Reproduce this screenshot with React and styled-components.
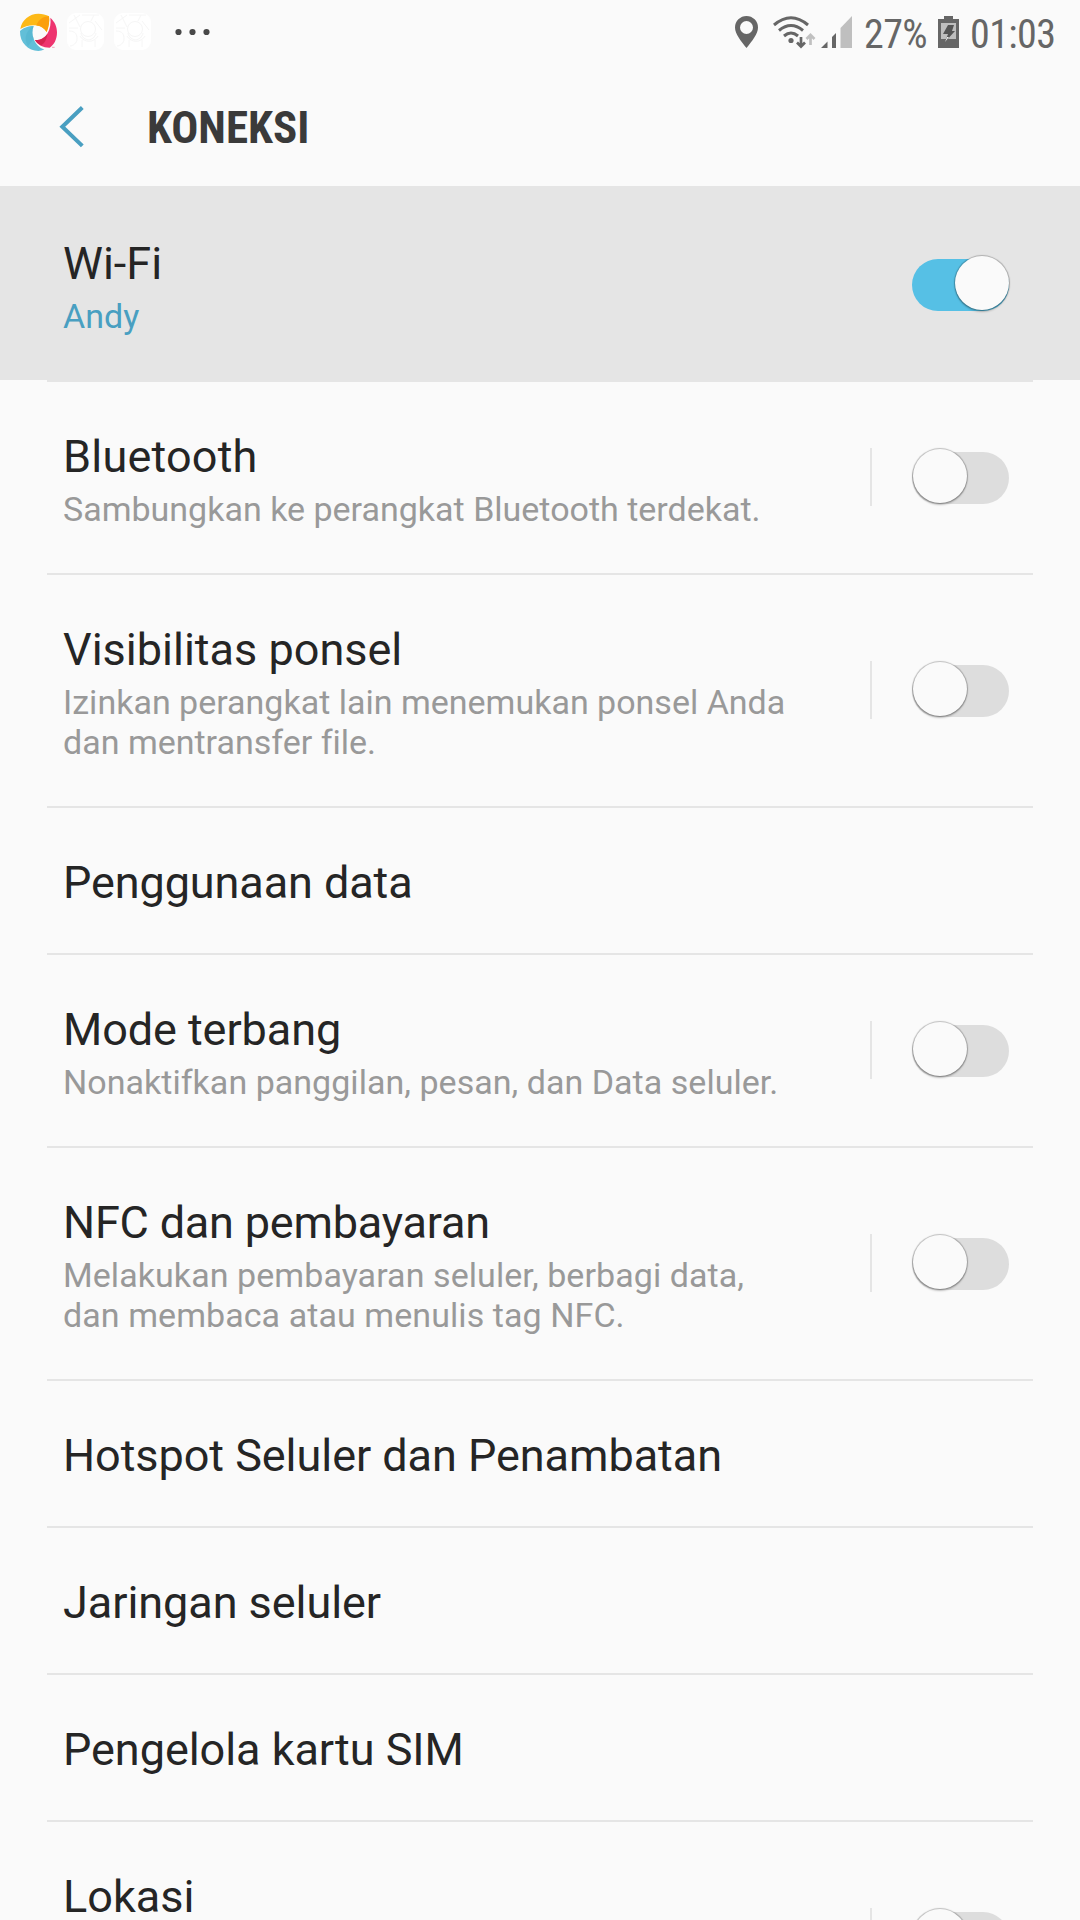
import React from "react";
import styled, { createGlobalStyle } from "styled-components";

const GlobalStyle = createGlobalStyle`
  html, body { margin: 0; padding: 0; background: #fafafa; }
  *, *::before, *::after { box-sizing: border-box; }
`;

const Screen = styled.main`
  display: flex;
  flex-direction: column;
  width: 1080px;
  height: 1920px;
  overflow: hidden;
  background: #fafafa;
  font-family: Roboto, "Liberation Sans", sans-serif;
  font-variant-ligatures: none;
  color: #252525;
`;

const StatusBar = styled.div`
  display: flex;
  flex: none;
  justify-content: space-between;
  height: 66px;
  padding: 0 26px 0 19px;
  color: #666;
`;

const Notifications = styled.div`
  display: flex;
  padding-top: 13px;
`;

const Indicators = styled.div`
  display: flex;
`;

const Glyph = styled.svg`
  display: block;
  flex: none;
  overflow: visible;
  margin-left: ${(p) => p.$gap || 0}px;
  margin-top: ${(p) => p.$drop || 0}px;
`;

const StatusText = styled.span`
  display: block;
  width: ${(p) => p.$width}px;
  margin-left: ${(p) => p.$gap}px;
  padding-top: 11px;
  font-size: 40px;
  line-height: 48px;
  letter-spacing: -0.6px;
  white-space: nowrap;
  font-stretch: 75%;
`;

const Header = styled.header`
  display: flex;
  flex: none;
  height: 120px;
  padding-left: 59px;
`;

const BackButton = styled.button`
  display: block;
  width: 88px;
  height: 120px;
  padding: 2px 0 0;
  border: 0;
  background: none;
`;

const Chevron = styled.svg`
  display: block;
`;

const Title = styled.h1`
  margin: 0;
  padding-top: 35px;
  font-size: 45px;
  line-height: 54px;
  font-weight: 700;
  color: #3a3a3a;
  white-space: nowrap;
  font-stretch: 75%;
`;

const List = styled.div`
  display: flex;
  flex-direction: column;
`;

const Row = styled.section`
  display: flex;
  flex: none;
  align-items: center;
  height: ${(p) => p.$height}px;
  padding: ${(p) => (p.$active ? 3 : 0)}px 70px 0 63px;
  background: ${(p) => (p.$active ? "#e5e5e5" : "transparent")};
`;

const Divider = styled.hr`
  flex: none;
  width: 986px;
  height: 2px;
  margin: 0 auto;
  border: 0;
  background: #e5e5e5;
`;

const Copy = styled.div`
  flex: 1;
  align-self: stretch;
  padding-top: 52px;
  white-space: pre-line;
`;

const Label = styled.div`
  font-size: 45px;
  line-height: 46px;
  letter-spacing: ${(p) => p.$tracking || 0}px;
`;

const Summary = styled.div`
  padding-top: 9px;
  font-size: 34px;
  line-height: 40px;
  letter-spacing: ${(p) => p.$tracking || 0}px;
  color: ${(p) => (p.$accent ? "#499fc1" : "#999")};
`;

const Separator = styled.div`
  width: 2px;
  height: 58px;
  margin: 0 40px 1px 0;
  background: #e5e5e5;
`;

const Track = styled.div`
  display: flex;
  align-items: center;
  justify-content: ${(p) => (p.$on ? "flex-end" : "flex-start")};
  width: 97px;
  height: 52px;
  border-radius: 26px;
  margin-right: 1px;
  padding-left: ${(p) => (p.$on ? 0 : 1)}px;
  background: ${(p) => (p.$on ? "#56c0e5" : "#dddddd")};
`;

const Thumb = styled.div`
  flex: none;
  width: 54px;
  height: 54px;
  margin-bottom: 3px;
  border-radius: 50%;
  background: #fafafa;
  box-shadow: 0 0 1px 1px rgba(0, 0, 0, 0.24), 0 2px 2px rgba(0, 0, 0, 0.22);
`;

const rows = [
  { label: "Wi-Fi", summary: "Andy", accent: true, active: true, toggle: "on", height: 194 },
  { label: "Bluetooth", tracking: 0.2, summary: "Sambungkan ke perangkat Bluetooth terdekat.", toggle: "off", height: 191 },
  { label: "Visibilitas ponsel", summary: "Izinkan perangkat lain menemukan ponsel Anda\ndan mentransfer file.", toggle: "off", height: 231 },
  { label: "Penggunaan data", tracking: -0.1, height: 145 },
  { label: "Mode terbang", tracking: -0.08, summary: "Nonaktifkan panggilan, pesan, dan Data seluler.", summaryTracking: 0.03, toggle: "off", height: 191 },
  { label: "NFC dan pembayaran", tracking: -0.2, summary: "Melakukan pembayaran seluler, berbagi data,\ndan membaca atau menulis tag NFC.", summaryTracking: 0.07, toggle: "off", height: 231 },
  { label: "Hotspot Seluler dan Penambatan", tracking: -0.05, height: 145 },
  { label: "Jaringan seluler", tracking: -0.06, height: 145 },
  { label: "Pengelola kartu SIM", tracking: -0.05, height: 145 },
  { label: "Lokasi", toggle: "off", height: 231 },
];

function SwirlIcon() {
  return (
    <Glyph width="40" height="40" viewBox="0 0 120 120">
      <path d="M4 48C8 20 32 2 58 2c12 0 23 3 32 8 2 14 0 30-7 47-7-11-16-18-28-19C35 35 18 40 4 48z" fill="#fdb917" />
      <path d="M52 37C58 22 70 10 90 10c2 14 0 30-7 47-7-11-17-18-31-20z" fill="#fb9f0c" />
      <path d="M94 14c13 12 20 26 20 44 0 22-9 38-22 46-20 0-36-8-44-23 15 1 29-6 37-19 9-15 11-31 9-48z" fill="#ee346f" />
      <path d="M48 81c15 1 29-6 37-19-1 15-8 29-19 35-8-4-14-9-18-16z" fill="#d62350" />
      <path d="M3 54c9-9 24-15 41-15-5 13-5 26 0 38 6 16 17 28 32 32-6 3-12 5-18 5C28 113 2 90 3 54z" fill="#62bfd8" />
      <path d="M44 39c-5 13-5 26 0 38L27 100C13 76 21 52 44 39z" fill="#4aafcb" opacity=".4" />
      <path d="M99 103h8" stroke="#ee7a9f" strokeWidth="2" />
    </Glyph>
  );
}

function AppTile({ gap }) {
  return (
    <Glyph width="37" height="37" viewBox="0 0 37 37" $gap={gap} fill="none" stroke="#f6f6f6" strokeWidth="1">
      <rect width="37" height="37" rx="9" fill="#fff" stroke="none" />
      <circle cx="21" cy="16" r="7.5" />
      <path d="M7 2l6 12M2 10l11-8M15 2h17M27 2l-3 6M28 8l7 9M14 20c2 9 13 9 15 0M13 23c4 7 14 7 18 0M2 18c7 0 8 4 8 8s-4 7-7 7M15 27v7M28 27v7M2 15h9" />
    </Glyph>
  );
}

function Switch({ on }) {
  return (
    <Track $on={on} role="switch" aria-checked={on}>
      <Thumb />
    </Track>
  );
}

export default function App() {
  return (
    <Screen>
      <GlobalStyle />
      <StatusBar>
        <Notifications>
          <SwirlIcon />
          <AppTile gap={8} />
          <AppTile gap={10} />
          <Glyph width="36" height="38" $gap={24} fill="#484848">
            <circle cx="3.5" cy="19" r="3.1" />
            <circle cx="17.5" cy="19" r="3.1" />
            <circle cx="31.5" cy="19" r="3.1" />
          </Glyph>
        </Notifications>
        <Indicators>
          <Glyph width="24" height="32" $drop={16} fill="#666">
            <path fillRule="evenodd" d="M11.5 0A11.5 11.5 0 0 0 0 11.5C0 18 6 25 11.5 32 17 25 23 18 23 11.5A11.5 11.5 0 0 0 11.5 0zm0 5a6.5 6.5 0 1 1 0 13 6.5 6.5 0 0 1 0-13z" />
          </Glyph>
          <Glyph width="43" height="33" $gap={14} $drop={16} fill="none" stroke="#666" strokeWidth="3">
            <path d="M1 9Q18-5.5 35 9M6 14.5Q18 4.5 30 14.5M11 20Q18 14 25 20" />
            <circle cx="18" cy="24.5" r="2.6" fill="#666" stroke="none" />
            <path d="M28 21v9M24 26.5l4 4 4-4" strokeWidth="2.7" />
            <path d="M37.5 29v-9M33.5 23l4-4 4 4" stroke="#c0c0c0" strokeWidth="2.7" />
          </Glyph>
          <Glyph width="31" height="32" $gap={5} $drop={16}>
            <path d="M0 32h6.5v-6.5zM11 32h4V17l-4 4z" fill="#666" />
            <path d="M19.5 32H31V0L19.5 12z" fill="#bfbfbf" />
          </Glyph>
          <StatusText $gap={12} $width={64}>27%</StatusText>
          <Glyph width="21" height="32" $gap={10} $drop={16}>
            <path d="M6 0h9v3h6v29H0V3h6z" fill="#666" />
            <path d="M3 7h15v16H3z" fill="#bebebe" />
            <path d="M10 9h6l-2 6h3L7 26l3-8H5z" fill="#555" />
            <path d="M7 26l2-5h2z" fill="#eee" />
          </Glyph>
          <StatusText $gap={11} $width={84}>01:03</StatusText>
        </Indicators>
      </StatusBar>
      <Header>
        <BackButton aria-label="Kembali">
          <Chevron width="25" height="42" viewBox="0 0 25 42">
            <path d="M23.3 1.5L3.3 20.7l20 19.2" fill="none" stroke="#499fc1" strokeWidth="4" />
          </Chevron>
        </BackButton>
        <Title>KONEKSI</Title>
      </Header>
      <List>
        {rows.map((row) => (
          <React.Fragment key={row.label}>
            <Row $height={row.height} $active={row.active}>
              <Copy>
                <Label $tracking={row.tracking}>{row.label}</Label>
                {row.summary && (
                  <Summary $accent={row.accent} $tracking={row.summaryTracking}>{row.summary}</Summary>
                )}
              </Copy>
              {row.toggle === "off" && <Separator />}
              {row.toggle && <Switch on={row.toggle === "on"} />}
            </Row>
            <Divider />
          </React.Fragment>
        ))}
      </List>
    </Screen>
  );
}
